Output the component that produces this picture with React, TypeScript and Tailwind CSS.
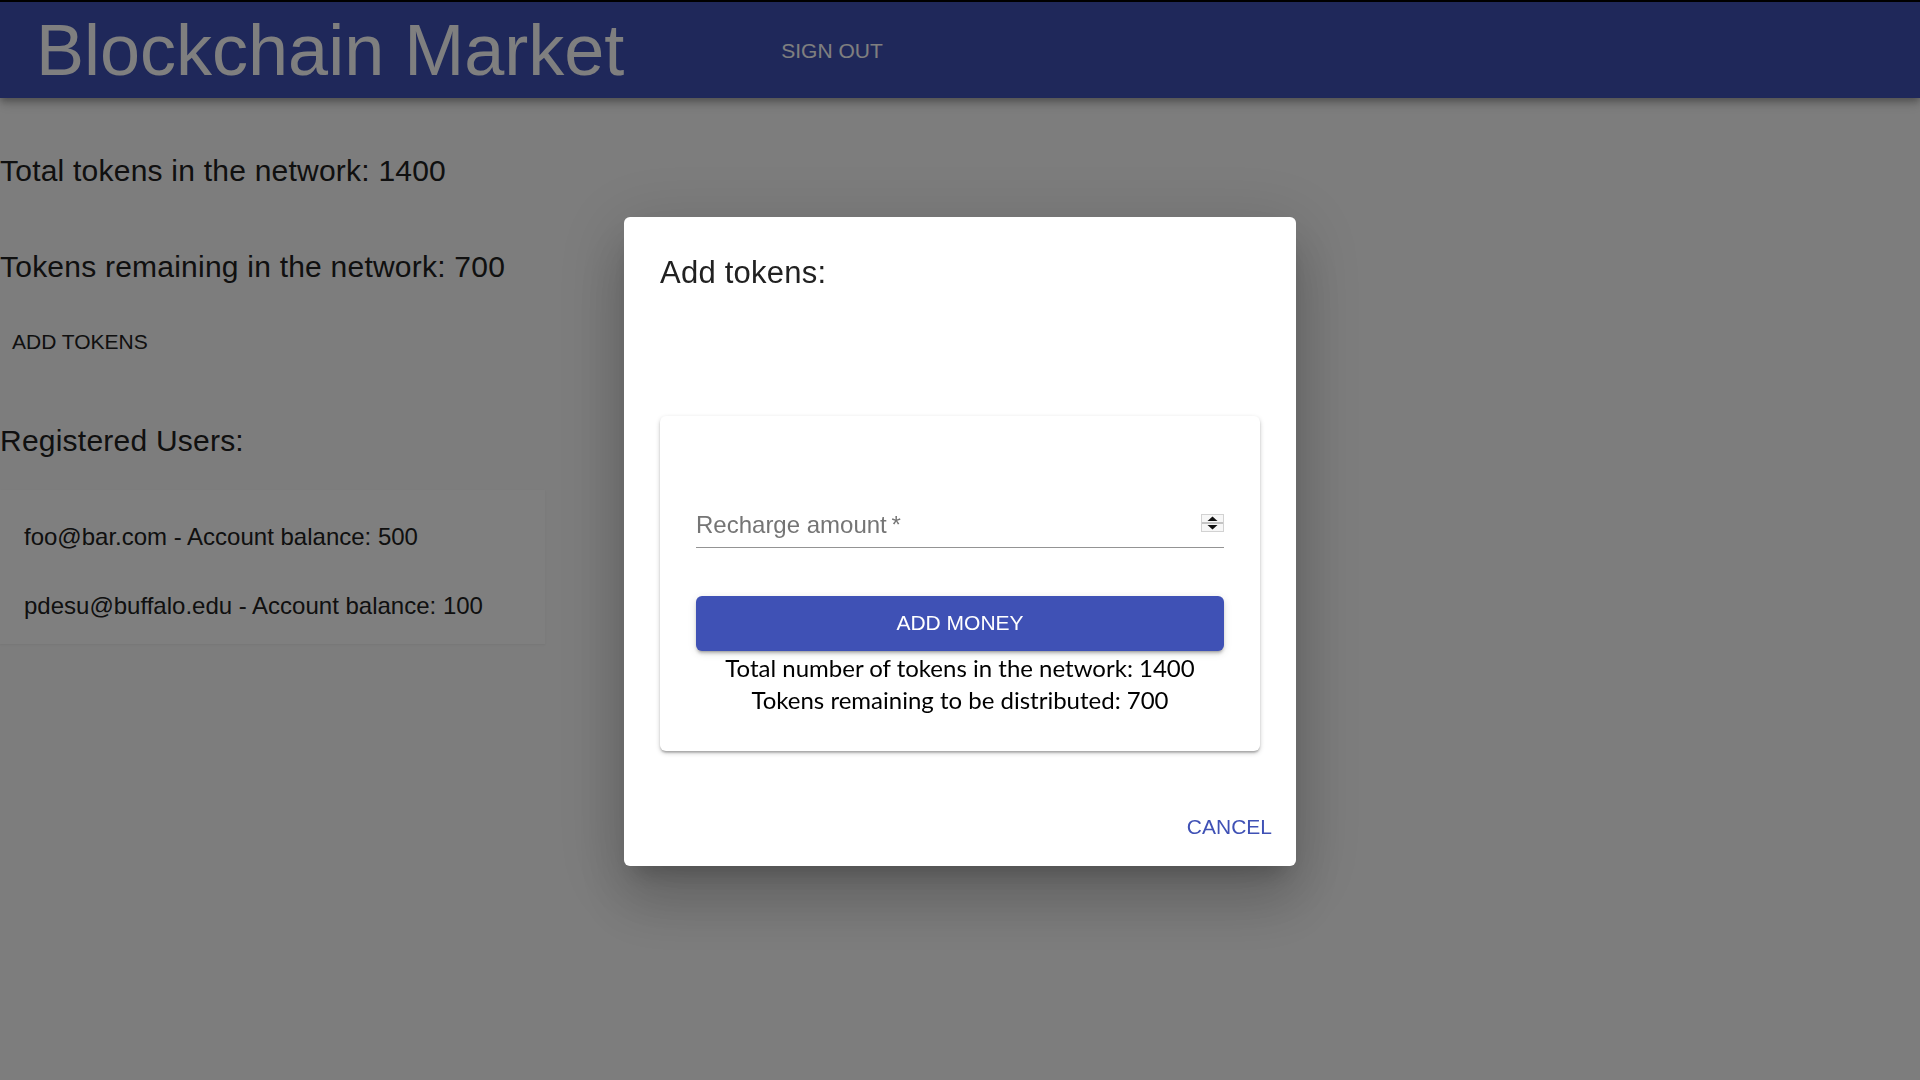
import React from 'react';

const users = [
  { email: 'foo@bar.com', balance: 500 },
  { email: 'pdesu@buffalo.edu', balance: 100 },
];

const sans = "font-['Liberation_Sans',Arial,sans-serif]";

const Spinner: React.FC = () => (
  <svg width="23" height="18" viewBox="0 0 23 18" className="mt-[3px] shrink-0">
    <rect x="0.5" y="0.5" width="22" height="17" fill="#f7f7f7" stroke="#d2d2d2" />
    <rect x="1" y="8" width="21" height="2" fill="#c4c4c4" />
    <polygon points="6.5,7 11.5,2.5 16.5,7" fill="#111" />
    <polygon points="6.5,11 11.5,15.5 16.5,11" fill="#111" />
  </svg>
);

const AddTokensDialog: React.FC = () => {
  return (
    <div className="fixed inset-0 bg-black/50 flex items-center justify-center">
      <div className="mt-[2px] w-[672px] bg-white rounded-[6px] shadow-[0_16px_22px_-10px_rgba(0,0,0,0.2),0_36px_57px_4px_rgba(0,0,0,0.14),0_13px_69px_12px_rgba(0,0,0,0.12)]">
        <h2 className="pt-[32px] px-[36px] text-[31px] leading-[48px] tracking-[0.0075em] text-[#212121]">Add tokens:</h2>

        <div className="mx-[36px] mt-[119px] bg-white rounded-[6px] pt-[95px] px-[36px] pb-[35px] shadow-[0_2px_5px_0_rgba(0,0,0,0.2),0_2px_2px_0_rgba(0,0,0,0.14),0_3px_2px_-2px_rgba(0,0,0,0.12)]">
          {/* number field */}
          <div className="border-b border-[#949494] pb-[8px]">
            <div className="flex items-start h-[28px]">
              <span className="flex-1 text-[24px] leading-[28px] text-[#757575]">Recharge amount{'\u2009'}*</span>
              <Spinner />
            </div>
          </div>

          <button className="mt-[48px] w-full h-[55px] rounded-[6px] bg-[#3f51b5] text-white text-[21px] shadow-[0_3px_2px_-2px_rgba(0,0,0,0.2),0_3px_3px_0_rgba(0,0,0,0.14),0_2px_8px_0_rgba(0,0,0,0.12)]">
            ADD MONEY
          </button>

          <div className="mt-[1px] font-['Lato',sans-serif] text-[24px] leading-[32px] text-black text-center">
            <p>Total number of tokens in the network: 1400</p>
            <p>Tokens remaining to be distributed: 700</p>
          </div>
        </div>

        <div className="flex justify-end mt-[49px] pr-[12px] pb-[12px]">
          <button className="h-[54px] px-[12px] text-[21px] text-[#3f51b5]">CANCEL</button>
        </div>
      </div>
    </div>
  );
};

const App: React.FC = () => {
  return (
    <div className={`${sans} min-h-screen bg-[#fafafa] text-[#212121]`}>
      <header className="border-t-2 border-black">
        <div className="h-[96px] bg-[#3f51b5] flex items-center pl-[36px] shadow-[0_3px_6px_-1px_rgba(0,0,0,0.2),0_6px_8px_0_rgba(0,0,0,0.14),0_2px_15px_0_rgba(0,0,0,0.12)]">
          <h1 className="text-[72px] leading-[84px] text-white">Blockchain Market</h1>
          <button className="ml-[145px] mt-[2px] h-[54px] px-[12px] text-[21px] text-white">SIGN OUT</button>
        </div>
      </header>

      <main>
        <h6 className="mt-[49px] text-[30px] leading-[48px] tracking-[0.0075em]">Total tokens in the network: 1400</h6>
        <h6 className="mt-[48px] text-[30px] leading-[48px] tracking-[0.0075em]">Tokens remaining in the network: 700</h6>
        <button className="mt-[24px] h-[54px] px-[12px] text-[21px] text-[#212121]">ADD TOKENS</button>
        <h6 className="mt-[48px] text-[30px] leading-[48px] tracking-[0.0075em]">Registered Users:</h6>

        <div className="mt-[25px] w-[545px] bg-white pt-[12px] pb-[4px] shadow-[0_1px_2px_0_rgba(0,0,0,0.06)]">
          {users.map((u) => (
            <div key={u.email} className="h-[69px] flex items-center px-[24px] text-[24px] leading-[36px]">
              {u.email} - Account balance: {u.balance}
            </div>
          ))}
        </div>
      </main>

      <AddTokensDialog />
    </div>
  );
};

export default App;
